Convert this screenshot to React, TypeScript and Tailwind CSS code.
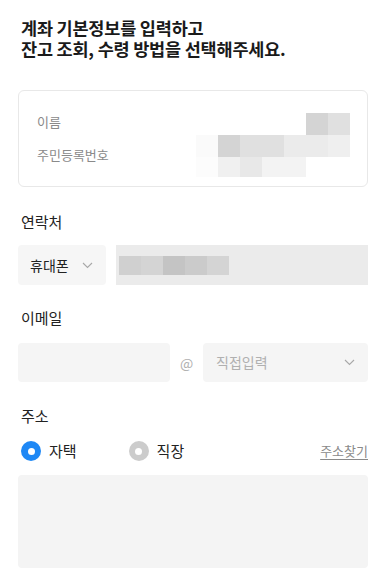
import React from "react";

const Chevron = ({ className = "" }: { className?: string }) => (
  <svg width="11" height="7" viewBox="0 0 11 7" className={className} fill="none">
    <path d="M1 1l4.5 4.5L10 1" stroke="#a8a8a8" strokeWidth="1.1" />
  </svg>
);

const Block = ({ c, h = "h-full" }: { c: string; h?: string }) => (
  <div className={`w-[22px] ${h}`} style={{ background: c }} />
);

export default function App() {
  return (
    <div
      className="w-[389px] h-[583px] bg-white overflow-hidden text-[#222]"
      style={{ fontFamily: '"Noto Sans CJK KR", "Noto Sans", sans-serif' }}
    >
      <div className="pl-[18px] pr-[21px]">
        <h1 className="pt-[17px] pl-[3px] text-[17.5px] leading-[21px] font-bold text-[#1a1a1a] tracking-[-0.2px]">
          계좌 기본정보를 입력하고
          <br />
          잔고 조회, 수령 방법을 선택해주세요.
        </h1>

        <div className="mt-[31px] h-[97px] border border-[#e8e8e8] rounded-[6px] flex pt-[22px] pl-[18px] pr-[17px]">
          <div className="flex-1 flex flex-col">
            <span className="text-[13px] leading-[18px] text-[#8a8a8a]">이름</span>
            <span className="mt-[15px] text-[13px] leading-[18px] text-[#8a8a8a]">주민등록번호</span>
          </div>
          <div className="flex flex-col">
            <div className="flex h-[22px] justify-end">
              <Block c="#d4d4d4" />
              <Block c="#e0e0e0" />
            </div>
            <div className="flex h-[22px]">
              <Block c="#fafafa" />
              <Block c="#d4d4d4" />
              <Block c="#e0e0e0" />
              <Block c="#e0e0e0" />
              <Block c="#ebebeb" />
              <Block c="#ebebeb" />
              <Block c="#efefef" />
            </div>
            <div className="flex h-[20px]">
              <Block c="#fcfcfc" />
              <Block c="#f0f0f0" />
              <Block c="#e8e8e8" />
              <Block c="#f3f3f3" />
              <Block c="#f3f3f3" />
              <Block c="#ffffff" />
              <Block c="#ffffff" />
            </div>
          </div>
        </div>

        <div className="mt-[25px] pl-[3px] text-[15px] leading-[20px]">연락처</div>
        <div className="mt-[13px] flex h-[40px] gap-[10px]">
          <div className="w-[88px] bg-[#f6f6f6] rounded-[4px] flex items-center pl-[12px]">
            <span className="text-[14px] flex-1">휴대폰</span>
            <Chevron className="mr-[13px]" />
          </div>
          <div className="flex-1 bg-[#ebebeb] flex items-center pl-[3px]">
            <div className="flex h-[19px]">
              <Block c="#d0d0d0" />
              <Block c="#d4d4d4" />
              <Block c="#c4c4c4" />
              <Block c="#cbcbcb" />
              <Block c="#d4d4d4" />
            </div>
          </div>
        </div>

        <div className="mt-[23px] pl-[3px] text-[15px] leading-[20px]">이메일</div>
        <div className="mt-[15px] flex h-[39px] items-center">
          <div className="w-[152px] h-full bg-[#f5f5f5] rounded-[4px]" />
          <span className="w-[33px] text-center text-[14px] text-[#b0b0b0] mt-[2px]">@</span>
          <div className="flex-1 h-full bg-[#f5f5f5] rounded-[4px] flex items-center pl-[13px]">
            <span className="text-[14px] text-[#b0b0b0] flex-1">직접입력</span>
            <Chevron className="mr-[13px]" />
          </div>
        </div>

        <div className="mt-[24px] pl-[3px] text-[15px] leading-[20px]">주소</div>
        <div className="mt-[14px] flex items-center h-[22px] pl-[3px]">
          <div className="w-[20px] h-[20px] rounded-full bg-[#1e88f5] flex items-center justify-center">
            <div className="w-[7px] h-[7px] rounded-full bg-white" />
          </div>
          <span className="ml-[8px] text-[15px]">자택</span>
          <div className="ml-[52px] w-[20px] h-[20px] rounded-full bg-[#cccccc] flex items-center justify-center">
            <div className="w-[7px] h-[7px] rounded-full bg-white" />
          </div>
          <span className="ml-[8px] text-[15px]">직장</span>
          <span className="ml-auto text-[13px] text-[#8a8a8a] underline underline-offset-[3px]">주소찾기</span>
        </div>
        <div className="mt-[13px] h-[93px] bg-[#f4f4f4] rounded-[4px]" />
      </div>
    </div>
  );
}
